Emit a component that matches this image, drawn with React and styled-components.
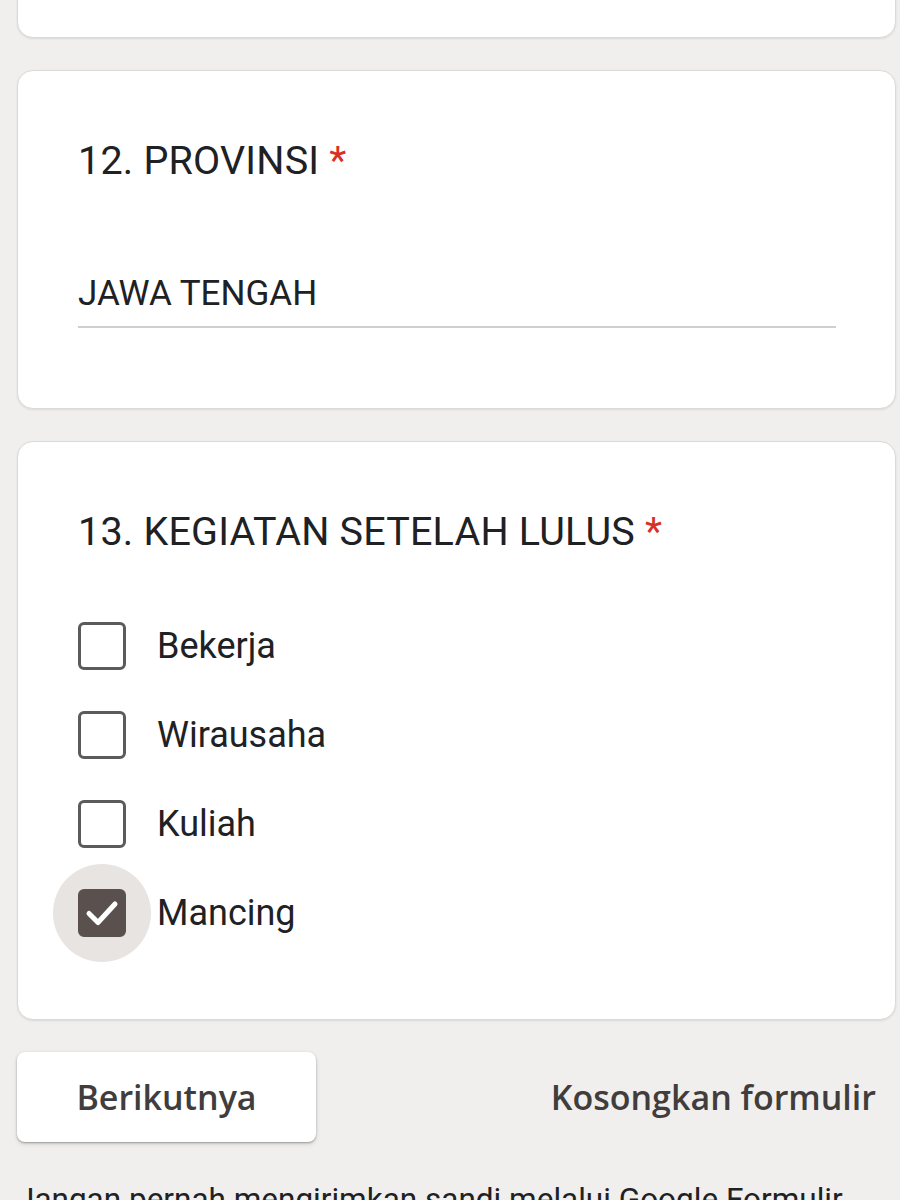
import React from "react";
import styled, { createGlobalStyle } from "styled-components";

const GlobalStyle = createGlobalStyle`
  html, body {
    margin: 0;
    padding: 0;
    background: #f1efee;
    overflow: hidden;
  }
  body {
    font-family: Roboto, "Liberation Sans", Arial, sans-serif;
    color: #202124;
  }
`;

const Page = styled.main`
  width: 900px;
  height: 1200px;
  overflow: hidden;
  padding: 0 4px 0 17px;
  box-sizing: border-box;
  display: flex;
  flex-direction: column;
  gap: 32px;
`;

const Card = styled.section`
  background: #fff;
  border: 1px solid #dcdad9;
  border-radius: 16px;
  box-shadow: 0 1px 2px rgba(60, 64, 67, 0.12);
  box-sizing: border-box;
  padding: 68px 60px ${p => p.bottom || 80}px 60px;
  display: flex;
  flex-direction: column;
`;

// previous question, only its bottom edge is on screen
const CutCard = styled(Card)`
  height: 200px;
  margin-top: -162px;
  flex-shrink: 0;
`;

const Title = styled.h2`
  margin: 0;
  font-size: 39.5px;
  line-height: 44px;
  font-weight: 400;
  color: #202124;
  letter-spacing: 0.2px;
`;

const Required = styled.span`
  color: #d93025;
  margin-left: 10px;
`;

const AnswerField = styled.div`
  margin-top: 91px;
  width: 758px;
  font-size: 35px;
  line-height: 40px;
  padding-bottom: 12px;
  border-bottom: 2px solid #cfcfcf;
  color: #202124;
`;

const Options = styled.ul`
  list-style: none;
  margin: 68px 0 0 0;
  padding: 0;
  display: flex;
  flex-direction: column;
  gap: 41px;
`;

const Option = styled.li`
  display: flex;
  align-items: center;
  gap: 31px;
  height: 48px;
`;

const BoxHolder = styled.span`
  position: relative;
  z-index: 0;
  display: flex;
`;

const Box = styled.span`
  position: relative;
  width: 48px;
  height: 48px;
  box-sizing: border-box;
  border-radius: 6px;
  border: 3px solid ${p => (p.checked ? "#5a514f" : "#5b5b5b")};
  background: ${p => (p.checked ? "#5a514f" : "transparent")};
  flex-shrink: 0;
  display: flex;
  align-items: center;
  justify-content: center;

  /* focus halo around the ticked box */
  &::before {
    content: "";
    display: ${p => (p.checked ? "block" : "none")};
    position: absolute;
    left: 50%;
    top: 50%;
    width: 98px;
    height: 98px;
    margin: -49px 0 0 -49px;
    border-radius: 50%;
    background: #e8e4e2;
    z-index: -1;
  }

  svg {
    display: block;
  }
`;

const Label = styled.span`
  font-size: 36px;
  line-height: 40px;
  color: #202124;
`;

const Actions = styled.div`
  display: flex;
  align-items: center;
  justify-content: space-between;
  padding-right: 20px;
`;

const NextButton = styled.button`
  width: 299px;
  height: 90px;
  background: #fff;
  border: none;
  border-radius: 8px;
  box-shadow: 0 1px 2px rgba(0, 0, 0, 0.3), 0 2px 5px rgba(0, 0, 0, 0.12);
  font-family: "Open Sans", Roboto, sans-serif;
  font-size: 34px;
  font-weight: 600;
  color: #403d3c;
  cursor: pointer;
`;

const ClearLink = styled.span`
  font-family: "Open Sans", Roboto, sans-serif;
  font-size: 34px;
  font-weight: 600;
  color: #403d3c;
`;

const Notice = styled.p`
  margin: 6px 0 0 0;
  font-size: 31.5px;
  line-height: 40px;
  color: #202124;
  white-space: nowrap;
`;

const Check = () => (
  <svg width="40" height="40" viewBox="0 0 40 40">
    <path
      d="M7 20.5 L16 29.5 L33 11"
      fill="none"
      stroke="#fff"
      strokeWidth="5"
      strokeLinecap="round"
      strokeLinejoin="round"
    />
  </svg>
);

const options = [
  { label: "Bekerja", checked: false },
  { label: "Wirausaha", checked: false },
  { label: "Kuliah", checked: false },
  { label: "Mancing", checked: true },
];

export default function App() {
  return (
    <>
      <GlobalStyle />
      <Page>
        <CutCard />

        <Card>
          <Title>
            12. PROVINSI<Required>*</Required>
          </Title>
          <AnswerField>JAWA TENGAH</AnswerField>
        </Card>

        <Card bottom={82}>
          <Title>
            13. KEGIATAN SETELAH LULUS<Required>*</Required>
          </Title>
          <Options>
            {options.map(o => (
              <Option key={o.label}>
                <BoxHolder>
                  <Box checked={o.checked}>{o.checked && <Check />}</Box>
                </BoxHolder>
                <Label>{o.label}</Label>
              </Option>
            ))}
          </Options>
        </Card>

        <Actions>
          <NextButton>Berikutnya</NextButton>
          <ClearLink>Kosongkan formulir</ClearLink>
        </Actions>

        <Notice>Jangan pernah mengirimkan sandi melalui Google Formulir.</Notice>
      </Page>
    </>
  );
}
